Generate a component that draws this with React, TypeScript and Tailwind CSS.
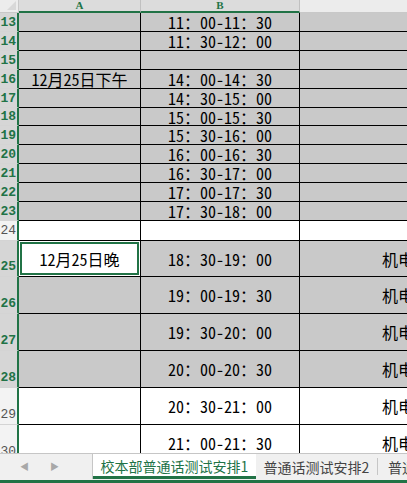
import React from "react"

type Row = {
    n: number
    h: number
    sel: boolean
    gray: boolean
    a?: string
    b?: string
    c?: string
    active?: boolean
}

const rows: Row[] = [
    { n: 13, h: 19, sel: true, gray: true, b: "11：00-11：30" },
    { n: 14, h: 19, sel: true, gray: true, b: "11：30-12：00" },
    { n: 15, h: 19, sel: true, gray: true },
    { n: 16, h: 19, sel: true, gray: true, a: "12月25日下午", b: "14：00-14：30" },
    { n: 17, h: 19, sel: true, gray: true, b: "14：30-15：00" },
    { n: 18, h: 18, sel: true, gray: true, b: "15：00-15：30" },
    { n: 19, h: 19, sel: true, gray: true, b: "15：30-16：00" },
    { n: 20, h: 19, sel: true, gray: true, b: "16：00-16：30" },
    { n: 21, h: 19, sel: true, gray: true, b: "16：30-17：00" },
    { n: 22, h: 19, sel: true, gray: true, b: "17：00-17：30" },
    { n: 23, h: 19, sel: true, gray: true, b: "17：30-18：00" },
    { n: 24, h: 20, sel: false, gray: false },
    { n: 25, h: 36, sel: true, gray: true, a: "12月25日晚", b: "18：30-19：00", c: "机电", active: true },
    { n: 26, h: 37, sel: true, gray: true, b: "19：00-19：30", c: "机电" },
    { n: 27, h: 37, sel: true, gray: true, b: "19：30-20：00", c: "机电" },
    { n: 28, h: 37, sel: true, gray: true, b: "20：00-20：30", c: "机电" },
    { n: 29, h: 37, sel: false, gray: false, b: "20：30-21：00", c: "机电" },
    { n: 30, h: 37, sel: false, gray: false, b: "21：00-21：30", c: "机电" },
]

const cellFont = { fontFamily: '"Noto Sans Mono CJK SC", "Noto Sans CJK SC", sans-serif' }

function SheetRow({ r }: { r: Row }) {
    const fill = r.gray ? "bg-[#c9c9c9]" : "bg-white"
    const small = r.h < 25
    return (
        <div className="flex shrink-0" style={{ height: r.h }}>
            <div
                className={`w-[19px] shrink-0 flex justify-end pr-[1px] border-r-2 border-r-[#217346] border-b border-b-[#d4d4d4] text-[13px] leading-none ${
                    small ? "items-center" : "items-end pb-[3px]"
                } ${r.sel ? "bg-[#d6d6d6] text-[#217346] font-bold" : "bg-[#f3f3f3] text-[#555]"}`}
                style={{ fontFamily: '"Liberation Mono", monospace' }}
            >
                {r.n}
            </div>
            <div className={`w-[122px] shrink-0 border-r border-b border-black ${r.active ? "bg-white p-[1px]" : fill}`}>
                <div
                    className={`h-full flex items-center justify-center text-[16px] leading-none font-light text-black ${
                        r.active ? "border-2 border-[#217346]" : ""
                    }`}
                    style={cellFont}
                >
                    {r.a}
                </div>
            </div>
            <div
                className={`w-[159px] shrink-0 border-r border-b border-black flex items-center justify-center text-[16px] leading-none font-light text-black ${fill}`}
                style={cellFont}
            >
                {r.b}
            </div>
            <div
                className={`flex-1 border-b border-black flex items-center pl-[82px] text-[16px] leading-none font-light text-black whitespace-nowrap overflow-hidden ${fill}`}
                style={cellFont}
            >
                {r.c}
            </div>
        </div>
    )
}

export default function App() {
    return (
        <div className="w-[407px] h-[483px] overflow-hidden flex flex-col bg-white">
            <div className="h-[453px] overflow-hidden flex flex-col">
                {/* column header */}
                <div className="flex h-[13px] shrink-0 bg-[#ececec]">
                    <div className="w-[19px] shrink-0 border-r border-[#c8c8c8] border-b border-b-[#c8c8c8] relative">
                        <div className="absolute right-[2px] bottom-[2px] w-0 h-0 border-l-[9px] border-l-transparent border-b-[9px] border-b-[#d8d8d8]" />
                    </div>
                    <div
                        className="w-[122px] shrink-0 bg-[#dcdcdc] border-r border-[#c0c0c0] border-b-2 border-b-[#217346] flex items-center justify-center text-[11px] leading-[11px] font-bold text-[#217346]"
                        style={{ fontFamily: '"Liberation Serif", serif' }}
                    >
                        A
                    </div>
                    <div
                        className="w-[159px] shrink-0 bg-[#dcdcdc] border-r border-[#c0c0c0] border-b-2 border-b-[#217346] flex items-center justify-center text-[11px] leading-[11px] font-bold text-[#217346]"
                        style={{ fontFamily: '"Liberation Serif", serif' }}
                    >
                        B
                    </div>
                    <div className="flex-1 border-b border-[#c8c8c8]" />
                </div>
                {rows.map((r) => (
                    <SheetRow key={r.n} r={r} />
                ))}
            </div>

            {/* sheet tabs */}
            <div
                className="h-[30px] shrink-0 flex flex-col bg-[#f0f0f0] border-t border-[#c6c6c6]"
                style={{ fontFamily: '"Noto Sans CJK SC", sans-serif' }}
            >
                <div className="flex h-[25px]">
                    <div className="w-[93px] shrink-0 flex items-center border-r border-[#c6c6c6] text-[#a8a8a8] text-[9px]">
                        <span className="ml-[20px]">◀</span>
                        <span className="ml-[21px]">▶</span>
                    </div>
                    <div className="w-[163px] shrink-0 bg-white border-b-[3px] border-[#217346] flex items-center justify-center text-[14px] text-[#217346] leading-none pt-[1px]">
                        校本部普通话测试安排1
                    </div>
                    <div className="w-[122px] shrink-0 flex items-center justify-center text-[14px] leading-none text-[#444] border-r border-[#c6c6c6] my-[4px]">
                        普通话测试安排2
                    </div>
                    <div className="flex items-center pl-[10px] text-[14px] leading-none text-[#444] whitespace-nowrap">普通话</div>
                </div>
                <div className="flex-1" />
                <div className="h-[3px] bg-[#217346]" />
            </div>
        </div>
    )
}
